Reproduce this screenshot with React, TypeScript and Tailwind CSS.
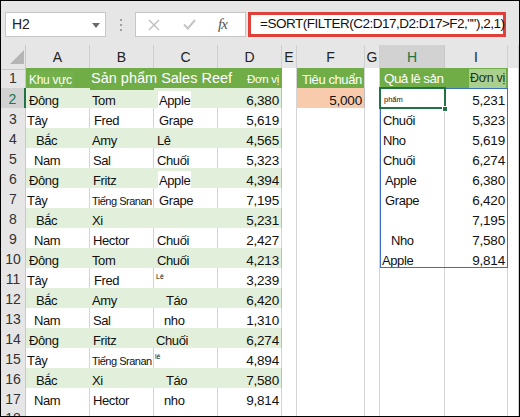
import React from 'react';

const COLS = 'grid grid-cols-[25px_64px_64px_64px_64px_15px_68px_15px_65px_63px_1fr]';
const SANS = "font-['Liberation_Sans',Arial,sans-serif]";
const GRID = 'border-r border-b border-[#d4d4d4] bg-white';

type Entry = { t: string; cls: string; size?: string };
type DataRow = { a: Entry; b: Entry; c: Entry; d: string };

const e = (t: string, cls: string, size = 'text-[13px] tracking-[-0.4px]'): Entry => ({ t, cls, size });
const SMALL = 'text-[11px] tracking-[-0.5px]';
const TINY = 'text-[7px] -translate-y-[4px]';

const data: DataRow[] = [
  { a: e('Đông', 'pl-[3px]'), b: e('Tom', 'pl-[2px]'), c: e('Apple', 'ml-[4px] bg-white px-[1px]'), d: '6,380' },
  { a: e('Tây', 'pl-[1px]'), b: e('Fred', 'pl-[4px]'), c: e('Grape', 'pl-[5px]'), d: '5,619' },
  { a: e('Bắc', 'pl-[10px]'), b: e('Amy', 'pl-[2px]'), c: e('Lê', 'pl-[3px]'), d: '4,565' },
  { a: e('Nam', 'pl-[8px]'), b: e('Sal', 'pl-[3px]'), c: e('Chuối', 'pl-[3px]'), d: '5,323' },
  { a: e('Đông', 'pl-[3px]'), b: e('Fritz', 'pl-[3px]'), c: e('Apple', 'ml-[4px] bg-white px-[1px]'), d: '4,394' },
  { a: e('Tây', 'pl-[1px]'), b: e('Tiếng Sranan', 'pl-[2px]', SMALL), c: e('Grape', 'pl-[5px]'), d: '7,195' },
  { a: e('Bắc', 'pl-[10px]'), b: e('Xi', 'pl-[2px]'), c: e('', ''), d: '5,231' },
  { a: e('Nam', 'pl-[8px]'), b: e('Hector', 'pl-[3px]'), c: e('Chuối', 'pl-[3px]'), d: '2,427' },
  { a: e('Đông', 'pl-[3px]'), b: e('Tom', 'pl-[2px]'), c: e('Chuối', 'pl-[3px]'), d: '4,213' },
  { a: e('Tây', 'pl-[1px]'), b: e('Fred', 'pl-[4px]'), c: e('Lê', 'pl-[2px]', TINY), d: '3,239' },
  { a: e('Bắc', 'pl-[10px]'), b: e('Amy', 'pl-[2px]'), c: e('Táo', 'pl-[12px]'), d: '6,420' },
  { a: e('Nam', 'pl-[8px]'), b: e('Sal', 'pl-[3px]'), c: e('nho', 'pl-[10px]'), d: '1,310' },
  { a: e('Đông', 'pl-[3px]'), b: e('Fritz', 'pl-[3px]'), c: e('Chuối', 'pl-[2px]'), d: '6,274' },
  { a: e('Tây', 'pl-[1px]'), b: e('Tiếng Sranan', 'pl-[2px]', SMALL), c: e('lê', 'pl-[1px]', TINY), d: '4,894' },
  { a: e('Bắc', 'pl-[10px]'), b: e('Xi', 'pl-[2px]'), c: e('Táo', 'pl-[12px]'), d: '7,580' },
  { a: e('Nam', 'pl-[8px]'), b: e('Hector', 'pl-[3px]'), c: e('nho', 'pl-[10px]'), d: '9,814' },
];

const results: { h: Entry; i: string }[] = [
  { h: e('phẩm', 'pl-[4px]', 'text-[7.5px] -translate-y-[2px]'), i: '5,231' },
  { h: e('Chuối', 'pl-[3px]'), i: '5,323' },
  { h: e('Nho', 'pl-[3px] text-[#2e1d5c]'), i: '5,619' },
  { h: e('Chuối', 'pl-[3px]'), i: '6,274' },
  { h: e('Apple', 'pl-[5px]'), i: '6,380' },
  { h: e('Grape', 'pl-[5px]'), i: '6,420' },
  { h: e('', ''), i: '7,195' },
  { h: e('Nho', 'pl-[11px] text-[#2e1d5c]'), i: '7,580' },
  { h: e('Apple', 'pl-[2px]'), i: '9,814' },
];

const Num = ({ v }: { v: string }) => (
  <span className={`ml-auto pr-[2px] text-[13.5px] tracking-[-0.2px] text-[#111] ${SANS}`}>{v}</span>
);

const Txt = ({ x }: { x: Entry }) =>
  x.t ? <span className={`${SANS} ${x.size} text-[#111] whitespace-nowrap ${x.cls}`}>{x.t}</span> : null;

const HeaderRow = () => {
  const letters = ['A', 'B', 'C', 'D', 'E', 'F', 'G', 'H', 'I', ''];
  return (
    <div className={`${COLS} h-[23px]`}>
      <div className="relative bg-[#e6e6e6] border-r border-b border-[#c8c8c8]">
        <svg className="absolute left-[9px] top-[5px]" width="14" height="14" viewBox="0 0 14 14">
          <polygon points="14,0 14,14 0,14" fill="#b5b5b5" />
        </svg>
      </div>
      {letters.map((l, i) =>
        l === 'H' ? (
          <div key={i} className="flex items-center justify-center bg-[#d2d2d2] border-r border-[#c8c8c8] border-b-2 border-b-[#217346] text-[14px] text-[#217346] pt-[2px]">
            {l}
          </div>
        ) : (
          <div key={i} className="flex items-center justify-center bg-[#e6e6e6] border-r border-b border-[#d0d0d0] text-[14px] text-[#222] pt-[1px]">
            {l}
          </div>
        )
      )}
    </div>
  );
};

const RowHead = ({ n }: { n: number }) =>
  n === 2 ? (
    <div className="flex items-center justify-center bg-[#d2d2d2] border-b border-[#c8c8c8] border-r-2 border-r-[#217346] text-[14px] text-[#217346]">{n}</div>
  ) : (
    <div className="flex items-center justify-center bg-[#e6e6e6] border-r border-b border-[#c8c8c8] text-[14px] text-[#333]">{n}</div>
  );

const TitleRow = () => (
  <div className={`${COLS} h-[20px]`}>
    <RowHead n={1} />
    <div className="flex items-end pb-[1px] bg-[#70ad47] pl-[3px]">
      <span className={`${SANS} text-[12px] tracking-[-0.3px] text-white bg-[#74b04c] pr-[2px]`}>Khu vực</span>
    </div>
    <div className="relative bg-[#70ad47]">
      <span className={`absolute z-10 left-[1px] top-[0px] whitespace-nowrap text-[14.5px] leading-[20px] text-white ${SANS}`}>
        Sản phẩm Sales Reef
      </span>
    </div>
    <div className="bg-[#70ad47]" />
    <div className="flex items-center justify-end bg-[#70ad47] border-r border-[#70ad47] pr-[2px] pt-[1px]">
      <span className={`${SANS} text-[11.5px] tracking-[-0.3px] text-white whitespace-nowrap`}>Đơn vị</span>
    </div>
    <div className={GRID} />
    <div className="flex items-end pb-[1px] bg-[#70ad47] border-r border-[#d4d4d4] pl-[5px]">
      <span className={`${SANS} text-[13px] tracking-[-0.4px] text-white whitespace-nowrap`}>Tiêu chuẩn</span>
    </div>
    <div className={GRID} />
    <div className="flex items-end pb-[1px] bg-[#70ad47] pl-[4px]">
      <span className={`${SANS} text-[13.5px] tracking-[-0.6px] text-white whitespace-nowrap`}>Quả lê sản</span>
    </div>
    <div className="flex items-end justify-end pb-[2px] bg-[#70ad47] pr-[2px]">
      <span className={`${SANS} text-[12.5px] tracking-[-0.3px] text-[#1e3312] bg-[#a9d08e] px-[1px] whitespace-nowrap`}>Đơn vị</span>
    </div>
    <div className={GRID} />
  </div>
);

const DataRowView = ({ n, r }: { n: number; r: DataRow }) => {
  const green = n % 2 === 0;
  const base = green
    ? 'flex items-center pt-[3px] bg-[#e2efda] border-b border-[#a9d08e]'
    : 'flex items-center pt-[3px] bg-white border-b border-b-[#a9d08e] border-r border-r-[#d4d4d4]';
  const res = n >= 2 && n <= 10 ? results[n - 2] : null;
  return (
    <div className={`${COLS} h-[20px]`}>
      <RowHead n={n} />
      <div className={base}><Txt x={r.a} /></div>
      <div className={base}><Txt x={r.b} /></div>
      <div className={base}><Txt x={r.c} /></div>
      <div className={`${base} border-r border-r-[#a9d08e]`}><Num v={r.d} /></div>
      <div className={GRID} />
      {n === 2 ? (
        <div className="flex items-center pt-[2px] bg-[#f8cbad] border-r border-b border-[#bdbdbd]">
          <Num v="5,000" />
        </div>
      ) : (
        <div className={GRID} />
      )}
      <div className={GRID} />
      <div className={`flex items-center pt-[3px] ${GRID}`}>{res && <Txt x={res.h} />}</div>
      <div className={`flex items-center pt-[2px] ${GRID}`}>{res && <Num v={res.i} />}</div>
      <div className={GRID} />
    </div>
  );
};

const EmptyRow = ({ n }: { n: number }) => (
  <div className={`${COLS} h-[20px]`}>
    <RowHead n={n} />
    {Array.from({ length: 10 }).map((_, i) => (
      <div key={i} className={GRID} />
    ))}
  </div>
);

const Toolbar = () => (
  <div className="h-[44px] bg-[#e6e6e6] flex items-start pt-[11px] pl-[4px]">
    <div className="relative w-[101px] h-[25px] bg-white border border-[#c6c6c6] flex items-center pl-[6px]">
      <span className={`text-[14px] text-[#222] ${SANS}`}>H2</span>
      <svg className="absolute right-[5px] top-[10px]" width="8" height="5" viewBox="0 0 8 5">
        <polygon points="0,0 8,0 4,5" fill="#6b6b6b" />
      </svg>
    </div>
    <div className="ml-[14px] mt-[7px] flex flex-col gap-[3px]">
      <div className="w-[2px] h-[2px] bg-[#a0a0a0]" />
      <div className="w-[2px] h-[2px] bg-[#a0a0a0]" />
      <div className="w-[2px] h-[2px] bg-[#a0a0a0]" />
    </div>
    <div className="ml-[13px] w-[111px] h-[25px] bg-white border border-[#c6c6c6] flex items-center">
      <svg className="ml-[12px]" width="12" height="12" viewBox="0 0 12 12">
        <path d="M1 1 L11 11 M11 1 L1 11" stroke="#bdbdbd" strokeWidth="1.4" fill="none" />
      </svg>
      <svg className="ml-[23px]" width="13" height="11" viewBox="0 0 13 11">
        <path d="M1 5.5 L4.8 9.5 L12 1" stroke="#c4c4c4" strokeWidth="2" fill="none" />
      </svg>
      <span className="ml-[22px] text-[15px] italic text-[#555] font-['Liberation_Serif',serif] tracking-[-1px]">fx</span>
    </div>
    <div className="ml-[2px] w-[258px] h-[25px] bg-white border-[3px] border-[#e0403a] flex items-center pl-[9px]">
      <span className={`text-[13.5px] tracking-[-0.5px] text-[#111] whitespace-nowrap ${SANS}`}>
        =SORT(FILTER(C2:D17,D2:D17&gt;F2,""),2,1)
      </span>
    </div>
  </div>
);

export default function App() {
  return (
    <div className={`w-[520px] h-[417px] border border-black bg-white overflow-hidden ${SANS}`}>
      <Toolbar />
      <div className="relative">
        <HeaderRow />
        <TitleRow />
        {data.map((r, i) => (
          <DataRowView key={i} n={i + 2} r={r} />
        ))}
        <EmptyRow n={18} />
        {/* spill range H2:I10 */}
        <div className="absolute left-[379px] top-[43px] w-[128px] h-[180px] border border-[#3d6fc4] pointer-events-none" />
        {/* active cell H2 */}
        <div className="absolute left-[378px] top-[42px] w-[67px] h-[22px] border-2 border-[#217346] pointer-events-none" />
        <div className="absolute left-[441px] top-[61px] w-[6px] h-[6px] bg-[#217346] border border-white" />
      </div>
    </div>
  );
}
